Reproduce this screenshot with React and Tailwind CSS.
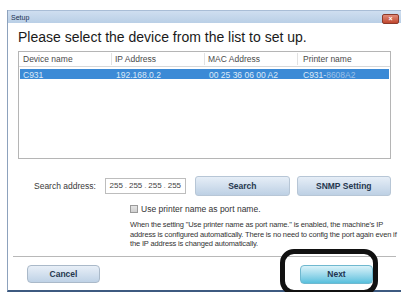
export default function App() {
  const font = { fontFamily: '"Liberation Sans", Arial, sans-serif' };
  return (
    <div className="w-[401px] h-[292px] bg-white overflow-hidden relative" style={font}>
      <div className="ml-[7px] mt-[10px] w-[394px] h-[282px] flex flex-col border-l border-[#8da2bd] border-b-2 border-b-[#3d5a80] bg-white">
        {/* title bar */}
        <div className="h-[13px] shrink-0 flex items-center justify-between bg-gradient-to-b from-[#cfdef0] to-[#b9cfe6] border-t border-[#a9bdd6]">
          <span className="text-[7px] text-[#1c2f50] pl-[3px] leading-none">Setup</span>
          <div className="mr-[2px] w-[17px] h-[10px] mt-[3px] rounded-[2px] bg-gradient-to-b from-[#e08a78] to-[#c0462d] border border-[#8c3a2a] flex items-center justify-center">
            <span className="text-white text-[7px] font-bold leading-none">×</span>
          </div>
        </div>
        {/* content */}
        <div className="flex-1 flex flex-col px-[10px]">
          <div className="text-[14px] text-[#1a1a1a] mt-[6px] leading-[17px]">Please select the device from the list to set up.</div>
          {/* table */}
          <div className="mt-[5px] h-[108px] shrink-0 border border-[#b5b5b5] w-[373px] flex flex-col">
            <div className="h-[15px] grid grid-cols-[93px_93px_93px_1fr] items-center text-[8.5px] text-[#4a4a4a] border-b border-[#d8d8d8]">
              <span className="pl-[4px] border-r border-[#e2e2e2]">Device name</span>
              <span className="pl-[3px] border-r border-[#e2e2e2]">IP Address</span>
              <span className="pl-[3px] border-r border-[#e2e2e2]">MAC Address</span>
              <span className="pl-[5px]">Printer name</span>
            </div>
            <div className="mt-[2px] h-[10px] bg-[#3b8ad6] grid grid-cols-[93px_93px_93px_1fr] items-center text-[8.5px] text-[#dbe9f7] mx-[1px]">
              <span className="pl-[3px]">C931</span>
              <span className="pl-[3px]">192.168.0.2</span>
              <span className="pl-[3px]">00 25 36 06 00 A2</span>
              <span className="pl-[4px]">C931-<span className="text-[#9cc1e8]">8608A2</span></span>
            </div>
          </div>
          {/* search row */}
          <div className="mt-[17px] flex items-center h-[20px]">
            <span className="ml-[16px] w-[71px] text-[8.5px] text-[#3a3a3a]">Search address:</span>
            <div className="w-[82px] h-[16px] border border-[#bdbdbd] flex items-center justify-between px-[4px] text-[8px] text-[#444]">
              <span>255</span><span className="text-[#888]">.</span><span>255</span><span className="text-[#888]">.</span><span>255</span><span className="text-[#888]">.</span><span>255</span>
            </div>
            <button className="ml-[9px] w-[95px] h-[20px] rounded-[3px] border border-[#b7c6d6] bg-gradient-to-b from-[#e6eef7] to-[#bdd0e4] text-[8.5px] font-bold text-[#26384f]">Search</button>
            <button className="ml-[7px] w-[95px] h-[20px] rounded-[3px] border border-[#b7c6d6] bg-gradient-to-b from-[#e6eef7] to-[#bdd0e4] text-[8.5px] font-bold text-[#26384f]">SNMP Setting</button>
          </div>
          {/* checkbox */}
          <div className="mt-[8px] ml-[112px] flex items-center gap-[3px] text-[8.5px] text-[#333] leading-[10px]">
            <div className="w-[8px] h-[8px] border border-[#9a9a9a] bg-gradient-to-b from-[#e4e4e4] to-[#cfcfcf]" />
            <span>Use printer name as port name.</span>
          </div>
          <div className="mt-[6px] ml-[112px] w-[268px] text-[7.5px] tracking-[-0.15px] leading-[9.5px] text-[#333]">
            When the setting "Use printer name as port name." is enabled, the machine's IP address is configured automatically. There is no need to config the port again even if the IP address is changed automatically.
          </div>
          <div className="mt-[7px] -mx-[5px] h-px shrink-0 bg-[#b8b8b8]" />
          <div className="mt-[8px] flex justify-between items-center">
            <button className="ml-[9px] w-[73px] h-[18px] rounded-[4px] border border-[#aab9c9] bg-gradient-to-b from-[#e8eff7] to-[#bfd2e6] text-[8.5px] font-bold text-[#26384f]">Cancel</button>
            <button className="mr-[18px] w-[73px] h-[19px] rounded-[4px] border border-[#6fb8cf] bg-gradient-to-b from-[#d9f2f9] to-[#57c0dd] text-[8.5px] font-bold text-[#1f3550]">Next</button>
          </div>
        </div>
      </div>
      {/* highlight annotation */}
      <div className="absolute left-[280px] top-[249px] w-[98px] h-[46px] rounded-[14px] border-[5px] border-[#111]" />
    </div>
  );
}
